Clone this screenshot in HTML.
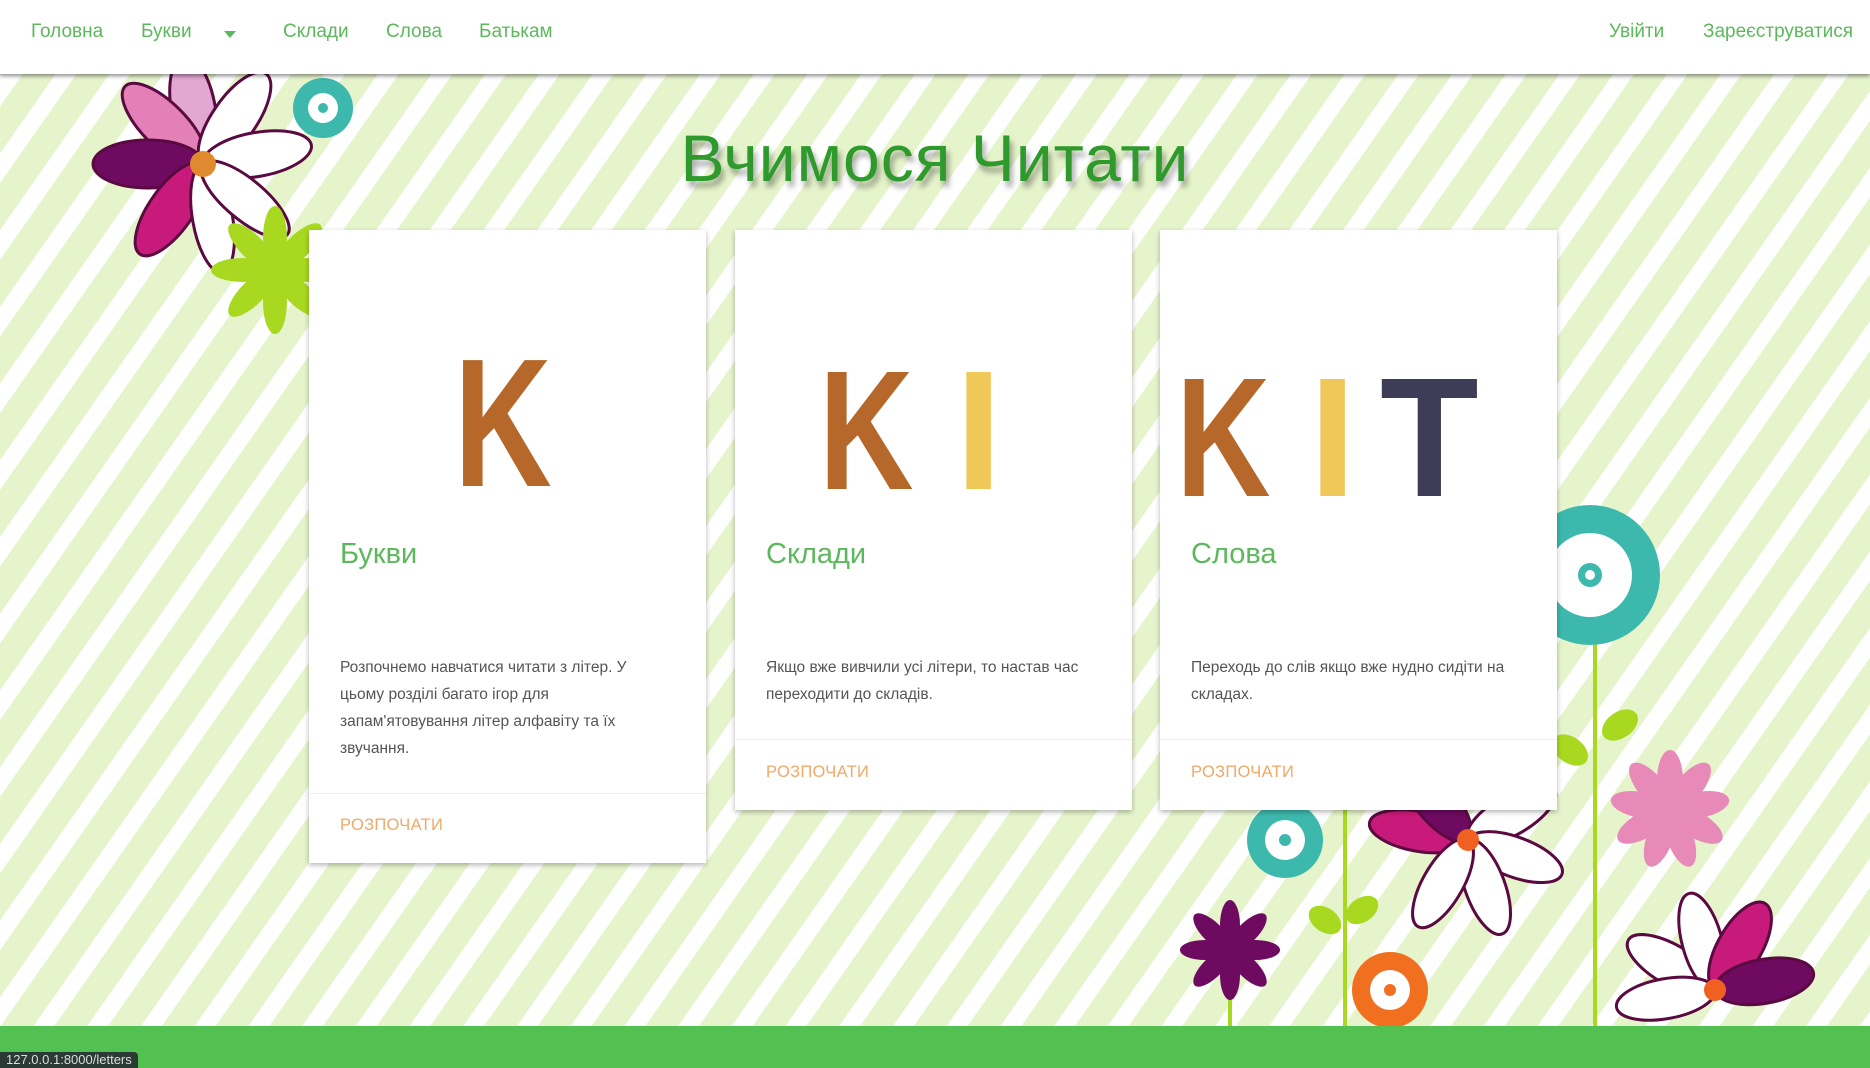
<!DOCTYPE html>
<html><head><meta charset="utf-8">
<style>
*{margin:0;padding:0;box-sizing:border-box}
html,body{width:1870px;height:1068px;overflow:hidden}
body{font-family:"Liberation Sans","DejaVu Sans",sans-serif;position:relative;
background:#e9f5d3 repeating-linear-gradient(125deg,#ffffff 0 17px,#e6f4cc 17px 44px);}
.nav{position:absolute;left:0;top:0;width:1870px;height:74px;background:#fff;box-shadow:0 2px 4px rgba(0,0,0,.45);z-index:5}
.nav a{position:absolute;top:21px;font-size:19px;color:#5cb85c;text-decoration:none}
.caret{position:absolute;left:224px;top:31px;width:0;height:0;border-left:6px solid transparent;border-right:6px solid transparent;border-top:7px solid #5cb85c}
h1{position:absolute;left:0;width:1870px;top:120px;text-align:center;font-weight:normal;font-size:66px;color:#2e9a2c;text-shadow:3px 6px 6px rgba(0,0,0,.35);letter-spacing:1px;z-index:2}
.card{position:absolute;top:230px;width:397px;background:#fff;box-shadow:0 2px 5px rgba(0,0,0,.3);z-index:3}
.big{position:absolute;line-height:1;font-weight:bold;font-family:"Liberation Sans",sans-serif;transform-origin:0 0}
.ct{position:absolute;left:31px;top:308px;font-size:29px;color:#5cb85c}
.cd{position:absolute;left:31px;top:424px;width:325px;font-size:15.5px;line-height:27px;color:#555}
.hr{position:absolute;left:0;right:0;border-top:1px solid #eee}
.btn{position:absolute;left:31px;font-size:16.5px;color:#f0a868;letter-spacing:.3px}
.foot{position:absolute;left:0;top:1026px;width:1870px;height:42px;background:#52c152;z-index:4}
.status{position:absolute;left:0;top:1052px;height:16px;padding:0 6px;background:#2a3a34;color:#ddd;font-size:13px;line-height:16px;border-top-right-radius:4px;z-index:6}
svg{position:absolute;z-index:1}
</style></head><body>
<div class="nav">
<a style="left:31px">Головна</a><a style="left:141px">Букви</a><span class="caret"></span>
<a style="left:283px">Склади</a><a style="left:386px">Слова</a><a style="left:479px">Батькам</a>
<a style="left:1609px">Увійти</a><a style="left:1703px">Зареєструватися</a>
</div>

<svg style="left:80px;top:60px" width="300" height="280" viewBox="0 0 300 280">
<g transform="translate(123,104)">
<ellipse cx="0" cy="-55" rx="22" ry="55" fill="#e2a8d3" stroke="#5a0a40" stroke-width="3" transform="rotate(-10)"/>
<ellipse cx="0" cy="-55" rx="22" ry="55" fill="#e480b8" stroke="#5a0a40" stroke-width="3" transform="rotate(-45)"/>
<ellipse cx="0" cy="-55" rx="22" ry="55" fill="#fff" stroke="#5a0a40" stroke-width="3" transform="rotate(35)"/>
<ellipse cx="0" cy="-55" rx="22" ry="55" fill="#fff" stroke="#5a0a40" stroke-width="3" transform="rotate(80)"/>
<ellipse cx="0" cy="-55" rx="24" ry="55" fill="#6e0a60" stroke="#5a0a40" stroke-width="3" transform="rotate(-90)"/>
<ellipse cx="0" cy="-55" rx="22" ry="55" fill="#c81a7a" stroke="#5a0a40" stroke-width="3" transform="rotate(-145)"/>
<ellipse cx="0" cy="-55" rx="20" ry="55" fill="#fff" stroke="#5a0a40" stroke-width="3" transform="rotate(170)"/>
<ellipse cx="0" cy="-55" rx="20" ry="55" fill="#fff" stroke="#5a0a40" stroke-width="3" transform="rotate(130)"/>
<circle r="13" fill="#e08a30"/>
</g>
<g transform="translate(243,48)" fill="#3cb8ac">
<circle r="30"/><circle r="15" fill="#fff"/><circle r="5" fill="#3cb8ac"/>
</g>
<g transform="translate(195,210)" fill="#a8d820">
<ellipse cy="-32" rx="12" ry="32"/><ellipse cy="-32" rx="12" ry="32" transform="rotate(45)"/><ellipse cy="-32" rx="12" ry="32" transform="rotate(90)"/><ellipse cy="-32" rx="12" ry="32" transform="rotate(135)"/><ellipse cy="-32" rx="12" ry="32" transform="rotate(180)"/><ellipse cy="-32" rx="12" ry="32" transform="rotate(225)"/><ellipse cy="-32" rx="12" ry="32" transform="rotate(270)"/><ellipse cy="-32" rx="12" ry="32" transform="rotate(315)"/>
</g>
</svg>

<svg style="left:1130px;top:480px" width="740" height="560" viewBox="0 0 740 560">
<g stroke="#a8d820" stroke-width="4"><line x1="465" y1="90" x2="465" y2="550"/><line x1="215" y1="320" x2="215" y2="550"/><line x1="100" y1="480" x2="100" y2="550"/></g>
<ellipse cx="490" cy="245" rx="20" ry="13" fill="#a8d820" transform="rotate(-35 490 245)"/>
<ellipse cx="440" cy="270" rx="20" ry="13" fill="#a8d820" transform="rotate(35 440 270)"/>
<ellipse cx="232" cy="430" rx="18" ry="12" fill="#a8d820" transform="rotate(-35 232 430)"/>
<ellipse cx="195" cy="440" rx="18" ry="12" fill="#a8d820" transform="rotate(35 195 440)"/>
<g transform="translate(460,95)" fill="#3cb8ac"><circle r="70"/><circle r="42" fill="#fff"/><circle r="12"/><circle r="5" fill="#fff"/></g>
<g transform="translate(540,330)" fill="#e88ab8">
<ellipse cy="-30" rx="13" ry="30"/><ellipse cy="-30" rx="13" ry="30" transform="rotate(40)"/><ellipse cy="-30" rx="13" ry="30" transform="rotate(80)"/><ellipse cy="-30" rx="13" ry="30" transform="rotate(120)"/><ellipse cy="-30" rx="13" ry="30" transform="rotate(160)"/><ellipse cy="-30" rx="13" ry="30" transform="rotate(200)"/><ellipse cy="-30" rx="13" ry="30" transform="rotate(240)"/><ellipse cy="-30" rx="13" ry="30" transform="rotate(280)"/><ellipse cy="-30" rx="13" ry="30" transform="rotate(320)"/>
</g>
<g transform="translate(338,360)" stroke="#5a0a40" stroke-width="3">
<ellipse cy="-50" rx="20" ry="50" fill="#c81a7a" transform="rotate(-80)"/><ellipse cy="-50" rx="20" ry="50" fill="#6e0a60" transform="rotate(-40)"/><ellipse cy="-50" rx="20" ry="50" fill="#fff" transform="rotate(60)"/><ellipse cy="-50" rx="20" ry="50" fill="#fff" transform="rotate(110)"/><ellipse cy="-50" rx="20" ry="50" fill="#fff" transform="rotate(160)"/><ellipse cy="-50" rx="20" ry="50" fill="#fff" transform="rotate(210)"/>
<circle r="11" fill="#f06020" stroke="none"/></g>
<g transform="translate(585,510)" stroke="#5a0a40" stroke-width="3">
<ellipse cy="-50" rx="20" ry="50" fill="#fff" transform="rotate(-60)"/><ellipse cy="-50" rx="20" ry="50" fill="#fff" transform="rotate(-15)"/><ellipse cy="-50" rx="22" ry="50" fill="#c81a7a" transform="rotate(30)"/><ellipse cy="-50" rx="22" ry="50" fill="#6e0a60" transform="rotate(80)"/><ellipse cy="-50" rx="20" ry="50" fill="#fff" transform="rotate(-100)"/>
<circle r="11" fill="#f06020" stroke="none"/></g>
<g transform="translate(100,470)" fill="#6e0a60">
<ellipse cy="-25" rx="10" ry="25"/><ellipse cy="-25" rx="10" ry="25" transform="rotate(45)"/><ellipse cy="-25" rx="10" ry="25" transform="rotate(90)"/><ellipse cy="-25" rx="10" ry="25" transform="rotate(135)"/><ellipse cy="-25" rx="10" ry="25" transform="rotate(180)"/><ellipse cy="-25" rx="10" ry="25" transform="rotate(225)"/><ellipse cy="-25" rx="10" ry="25" transform="rotate(270)"/><ellipse cy="-25" rx="10" ry="25" transform="rotate(315)"/>
</g>
<g transform="translate(155,360)" fill="#3cb8ac"><circle r="38"/><circle r="20" fill="#fff"/><circle r="6"/></g>
<g transform="translate(260,510)" fill="#f07020"><circle r="38"/><circle r="20" fill="#fff"/><circle r="6"/></g>
</svg>

<h1>Вчимося Читати</h1>

<div class="card" style="left:309px;height:633px">
<div class="big" style="left:145px;top:101px;font-size:183px;color:#b5682a;transform:scaleX(.74)">K</div>
<div class="ct">Букви</div>
<div class="cd">Розпочнемо навчатися читати з літер. У цьому розділі багато ігор для запам'ятовування літер алфавіту та їх звучання.</div>
<div class="hr" style="top:563px"></div>
<div class="btn" style="top:586px">РОЗПОЧАТИ</div>
</div>
<div class="card" style="left:735px;height:580px">
<div class="big" style="left:84px;top:116px;font-size:170px;color:#b5682a;transform:scaleX(.77)">K</div>
<div class="big" style="left:220px;top:116px;font-size:170px;color:#f0c85a">I</div>
<div class="ct">Склади</div>
<div class="cd">Якщо вже вивчили усі літери, то настав час переходити до складів.</div>
<div class="hr" style="top:509px"></div>
<div class="btn" style="top:533px">РОЗПОЧАТИ</div>
</div>
<div class="card" style="left:1160px;height:580px">
<div class="big" style="left:16px;top:123px;font-size:170px;color:#b5682a;transform:scaleX(.77)">K</div>
<div class="big" style="left:149px;top:123px;font-size:170px;color:#f0c85a">I</div>
<div class="big" style="left:220px;top:123px;font-size:170px;color:#3e3d57;transform:scaleX(.95)">T</div>
<div class="ct">Слова</div>
<div class="cd">Переходь до слів якщо вже нудно сидіти на складах.</div>
<div class="hr" style="top:509px"></div>
<div class="btn" style="top:533px">РОЗПОЧАТИ</div>
</div>

<div class="foot"></div>
<div class="status">127.0.0.1:8000/letters</div>
</body></html>
